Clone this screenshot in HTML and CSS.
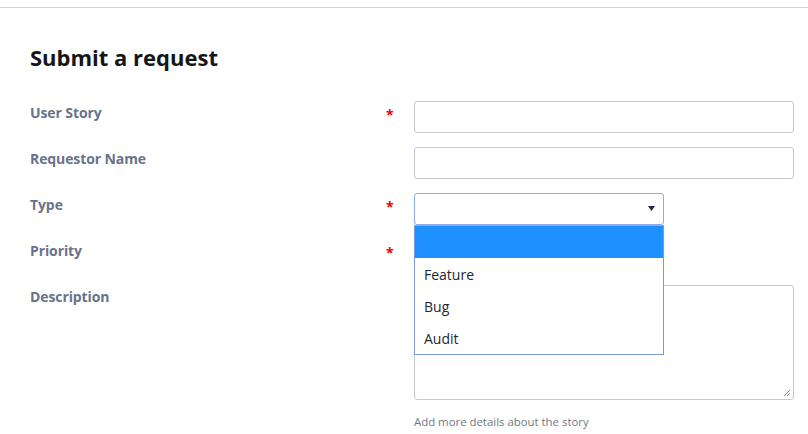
FILE: index.html
```html
<!DOCTYPE html>
<html>
<head>
<meta charset="utf-8">
<link rel="stylesheet" href="styles.css">
</head>
<body>
<div class="card">
  <h1 class="title">Submit a request</h1>
  <form class="form">
    <div class="row">
      <label class="label">User Story</label>
      <span class="req">*</span>
      <div class="field"><div class="input"></div></div>
    </div>
    <div class="row">
      <label class="label">Requestor Name</label>
      <span class="req"></span>
      <div class="field"><div class="input"></div></div>
    </div>
    <div class="row">
      <label class="label">Type</label>
      <span class="req">*</span>
      <div class="field">
        <div class="select focused">
          <svg class="caret" width="7" height="5" viewBox="0 0 7 5"><path d="M0 0H7L3.5 5Z" fill="#1f2a44"/></svg>
          <ul class="menu">
            <li class="opt active">&nbsp;</li>
            <li class="opt">Feature</li>
            <li class="opt">Bug</li>
            <li class="opt">Audit</li>
          </ul>
        </div>
      </div>
    </div>
    <div class="row">
      <label class="label">Priority</label>
      <span class="req">*</span>
      <div class="field"><div class="select"></div></div>
    </div>
    <div class="row">
      <label class="label">Description</label>
      <span class="req"></span>
      <div class="field">
        <div class="textarea">
          <svg class="grip" width="8" height="8" viewBox="0 0 8 8"><path d="M7 1L1 7M7 4L4 7" stroke="#888" stroke-width="1"/></svg>
        </div>
        <p class="help">Add more details about the story</p>
      </div>
    </div>
  </form>
</div>
</body>
</html>
```
FILE: styles.css
```css
* { box-sizing: border-box; }
html, body { margin: 0; padding: 0; background: #fff; }
body { font-family: "Open Sans", "Noto Sans", sans-serif; }
.card {
  margin-top: 7px;
  border-top: 1px solid #d3d3d3;
  padding: 33px 14px 0 30px;
}
.title {
  margin: 0 0 28px 0;
  font-size: 22px;
  line-height: 32px;
  font-weight: 700;
  color: #161616;
}
.form { display: flex; flex-direction: column; gap: 14px; }
.row {
  display: grid;
  grid-template-columns: 354px 30px 1fr;
  align-items: start;
}
.label {
  padding-top: 1px;
  font-size: 14px;
  font-weight: 700;
  line-height: 22px;
  color: #68738a;
  letter-spacing: -0.1px;
}
.req {
  color: #ee0000;
  font-size: 14px;
  font-weight: 700;
  line-height: 28px;
  padding-left: 2px;
}
.input, .select {
  height: 32px;
  border: 1px solid #c5c9d1;
  border-radius: 3px;
  background: #fff;
}
.select { width: 250px; position: relative; }
.select.focused { border-color: #89acec; z-index: 2; }
.caret { position: absolute; right: 8px; top: 12px; }
.menu {
  position: absolute;
  left: -1px;
  top: 31px;
  width: 250px;
  margin: 0;
  padding: 0;
  list-style: none;
  background: #fff;
  border: 1px solid #7a9bd9;
  border-top-color: #89acec;
}
.opt {
  height: 32px;
  line-height: 33px;
  padding-left: 9px;
  font-size: 14px;
  color: #1e2535;
}
.opt.active { background: #1e90ff; }
.textarea {
  height: 115px;
  border: 1px solid #c5c9d1;
  border-radius: 3px;
  position: relative;
}
.grip { position: absolute; right: 2px; bottom: 2px; }
.help {
  margin: 14px 0 0 0;
  font-size: 11.4px;
  line-height: 16px;
  color: #707783;
}
```
